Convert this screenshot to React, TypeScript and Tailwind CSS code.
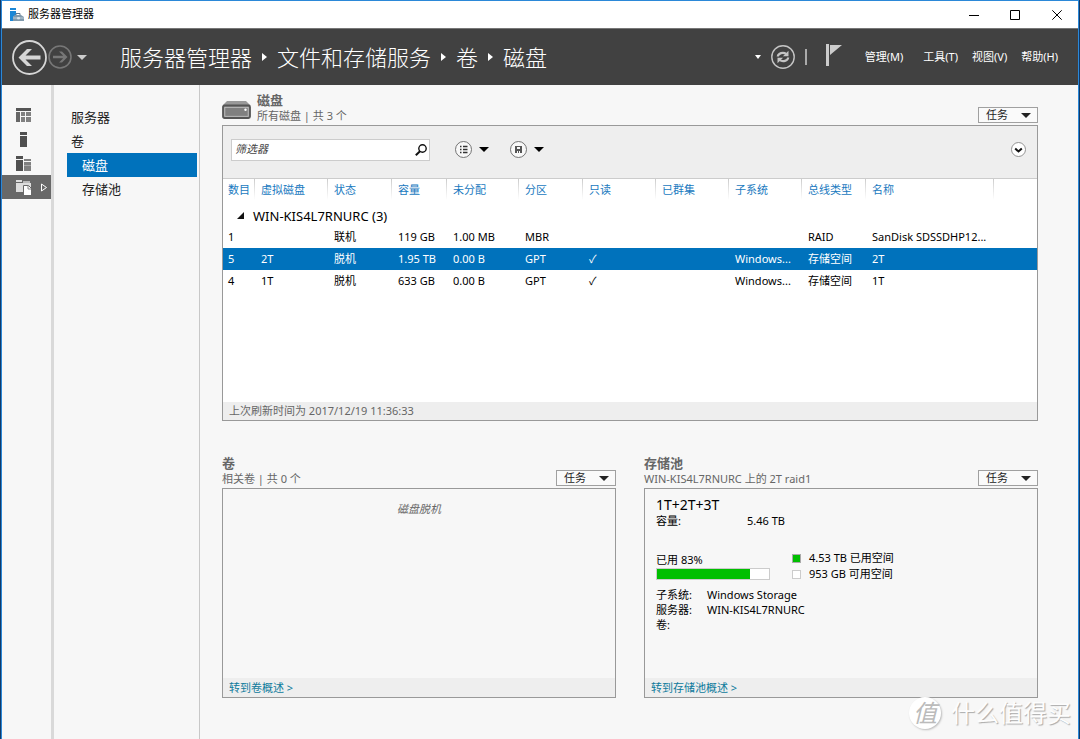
import { Fragment } from "react";
import type { ReactNode } from "react";
import clsx from "clsx";

const columns = [
  { key: "id", label: "数目", width: "w-[32px]" },
  { key: "virtualDisk", label: "虚拟磁盘", width: "w-[73px]" },
  { key: "status", label: "状态", width: "w-[64px]" },
  { key: "capacity", label: "容量", width: "w-[55px]" },
  { key: "unallocated", label: "未分配", width: "w-[72px]" },
  { key: "partition", label: "分区", width: "w-[64px]" },
  { key: "readOnly", label: "只读", width: "w-[73px]" },
  { key: "clustered", label: "已群集", width: "w-[73px]" },
  { key: "subsystem", label: "子系统", width: "w-[73px]" },
  { key: "bus", label: "总线类型", width: "w-[64px]" },
  { key: "name", label: "名称", width: "w-[128px]" },
] as const;

type Disk = Partial<Record<(typeof columns)[number]["key"], string>> & {
  selected?: boolean;
};

const disks: Disk[] = [
  { id: "1", status: "联机", capacity: "119 GB", unallocated: "1.00 MB", partition: "MBR", bus: "RAID", name: "SanDisk SDSSDHP12..." },
  { id: "5", virtualDisk: "2T", status: "脱机", capacity: "1.95 TB", unallocated: "0.00 B", partition: "GPT", readOnly: "✓", subsystem: "Windows...", bus: "存储空间", name: "2T", selected: true },
  { id: "4", virtualDisk: "1T", status: "脱机", capacity: "633 GB", unallocated: "0.00 B", partition: "GPT", readOnly: "✓", subsystem: "Windows...", bus: "存储空间", name: "1T" },
];

const crumbs = ["服务器管理器", "文件和存储服务", "卷", "磁盘"];
const menus = [
  { label: "管理(M)", gap: "mr-5" },
  { label: "工具(T)", gap: "mr-[14px]" },
  { label: "视图(V)", gap: "mr-[14px]" },
  { label: "帮助(H)", gap: "" },
];

function Caret({ className }: { className?: string }) {
  return (
    <svg viewBox="0 0 10 5" className={clsx("h-[5px] w-[10px] shrink-0", className)}>
      <path d="M0 0h10L5 5z" fill="currentColor" />
    </svg>
  );
}

function TaskButton() {
  return (
    <button className="flex h-4 w-[60px] items-center justify-between border border-[#a0a0a0] bg-[#fafafa] pr-[6px] pl-[7px] text-[11px] leading-[14px] text-[#222]">
      任务
      <Caret />
    </button>
  );
}

function SectionHeader({ title, subtitle, icon }: { title: string; subtitle: string; icon?: ReactNode }) {
  return (
    <header className="flex h-[33px] items-end justify-between pb-[2px]">
      <div className="flex items-center gap-[6px]">
        {icon}
        <div className="text-[#666]">
          <h2 className="text-[13px] leading-[15px] font-bold">{title}</h2>
          <p className="text-[11px] leading-[15px]">{subtitle}</p>
        </div>
      </div>
      <TaskButton />
    </header>
  );
}

function TitleBar() {
  return (
    <div className="flex h-[27px] items-center justify-between bg-white pl-2">
      <div className="flex items-center gap-1 text-[11px] text-black">
        <svg viewBox="0 0 14 14" className="h-[14px] w-[14px]">
          <path d="M0 0h6v2H0zM0 3h6v4l-3 2v4H0z" fill="#1b87d6" />
          <path d="M3 9l2-2h6l3 2v4H3z" fill="#7f99ac" />
          <path d="M6 7V5.500h4V7" fill="none" stroke="#60798c" />
          <path d="M3 10h11M7.500 9.500h2v1.500h-2z" stroke="#dce6ed" strokeWidth=".7" fill="#dce6ed" />
        </svg>
        服务器管理器
      </div>
      <div className="flex h-full text-black">
        <button aria-label="最小化" className="flex w-[41px] items-center justify-center">
          <svg viewBox="0 0 10 10" className="size-[10px]">
            <path d="M0 5.500h10" stroke="currentColor" />
          </svg>
        </button>
        <button aria-label="最大化" className="flex w-[42px] items-center justify-center">
          <svg viewBox="0 0 10 10" className="size-[10px]">
            <path d="M.5.5h9v9h-9z" fill="none" stroke="currentColor" />
          </svg>
        </button>
        <button aria-label="关闭" className="flex w-[42px] items-center justify-center">
          <svg viewBox="0 0 10 10" className="size-[10px]">
            <path d="M.3.3l9.400 9.400M9.700.3L.3 9.700" stroke="currentColor" />
          </svg>
        </button>
      </div>
    </div>
  );
}

function NavHeader() {
  return (
    <div className="flex h-[57px] items-center justify-between border-t border-[#777] bg-[#414141] pr-5 pl-[10px] text-white">
      <div className="flex items-center">
        <button aria-label="后退">
          <svg viewBox="0 0 35 35" className="size-[35px]">
            <circle cx="17.500" cy="17.500" r="16.500" fill="none" stroke="#d6d6d6" strokeWidth="1.800" />
            <path d="M6.500 17.500L15 9h5l-6.500 6.500h15v4h-15l6.500 6.500h-5z" fill="#d6d6d6" />
          </svg>
        </button>
        <button aria-label="前进" className="ml-[1px]">
          <svg viewBox="0 0 24 24" className="size-[24px]">
            <circle cx="12" cy="12" r="11" fill="none" stroke="#777" strokeWidth="1.600" />
            <path d="M19.500 12L14 6.500h-3l4.200 4.300H5v2.400h10.200L11 17.500h3z" fill="#777" />
          </svg>
        </button>
        <button aria-label="历史记录" className="ml-[5px] text-[#ccc]">
          <Caret />
        </button>
        <nav className="ml-[33px] flex items-center text-[22px] leading-8 font-light">
          {crumbs.map((crumb, i) => (
            <Fragment key={crumb}>
              {i > 0 && (
                <svg viewBox="0 0 5 8" className="mx-[10px] h-2 w-[5px]">
                  <path d="M0 0l5 4-5 4z" fill="#fff" />
                </svg>
              )}
              <a href="#">{crumb}</a>
            </Fragment>
          ))}
        </nav>
      </div>
      <div className="flex items-center text-[11px]">
        <svg viewBox="0 0 6 4" className="h-1 w-[6px]">
          <path d="M0 0h6L3 4z" fill="#fff" />
        </svg>
        <button aria-label="刷新" className="ml-[10px]">
          <svg viewBox="0 0 24 24" className="size-[24px]">
            <g fill="none" stroke="#c4c4c4">
              <circle cx="12" cy="12" r="11.200" strokeWidth="1.400" />
              <path d="M6.800 11.500a5 4 0 0 1 8.500-2.500M17.200 12.500a5 4 0 0 1-8.500 2.500" strokeWidth="2.200" />
            </g>
            <path d="M17.500 5.800v5.400h-5.600zM6.500 18.200v-5.400h5.600z" fill="#c4c4c4" />
          </svg>
        </button>
        <span className="ml-[10px] h-4 w-[2px] bg-[#aaa]" />
        <button aria-label="通知" className="ml-[19px]">
          <svg viewBox="0 0 16 24" className="mb-1 h-[24px] w-4">
            <path d="M0 1h3v22H0zM4 2h12L4 12z" fill="#ccc" />
          </svg>
        </button>
        <div className="ml-[23px] flex">
          {menus.map((menu) => (
            <button key={menu.label} className={menu.gap}>
              {menu.label}
            </button>
          ))}
        </div>
      </div>
    </div>
  );
}

function IconRail() {
  return (
    <div className="flex w-[52px] shrink-0 flex-col border-r-[3px] border-[#d9d9d9] bg-[#f7f7f7] pt-[18px]">
      <button aria-label="仪表板" className="flex h-6 items-center pl-[14px]">
        <svg viewBox="0 0 15 14" className="h-[14px] w-[15px]">
          <path d="M0 0h15v3H0z" fill="#555" />
          <path d="M0 4h4v10H0z" fill="#666" />
          <path d="M5 4h4v4H5zM10 4h5v4h-5zM5 9h4v5H5zM10 9h5v5h-5z" fill="#808080" />
        </svg>
      </button>
      <button aria-label="本地服务器" className="flex h-6 items-center pl-[18px]">
        <svg viewBox="0 0 7 15" className="h-[15px] w-[7px]">
          <path d="M0 0h7v3H0zM0 4h7v11H0z" fill="#505050" />
        </svg>
      </button>
      <button aria-label="所有服务器" className="flex h-6 items-center pl-[14px]">
        <svg viewBox="0 0 15 15" className="h-[15px] w-[15px]">
          <path d="M0 0h7v3H0zM0 4h7v11H0z" fill="#505050" />
          <path d="M8 3h7v2H8zM8 6h7v9H8z" fill="#808080" />
          <path d="M8 9.500h7" stroke="#a8a8a8" />
        </svg>
      </button>
      <button aria-label="文件和存储服务" className="flex h-6 items-center gap-[10px] bg-[#686868] pl-[14px]">
        <svg viewBox="0 0 15 15" className="h-[15px] w-[15px]">
          <path d="M0 0h6v2H0zM0 3h15v9H0z" fill="#ddd" />
          <path d="M7 1h7v2H7z" fill="#bbb" />
          <path d="M7.500 5.500h5l3 3v7h-8z" fill="#fff" stroke="#686868" />
          <path d="M12 5.500V9h3.500" fill="none" stroke="#888" />
        </svg>
        <svg viewBox="0 0 6 9" className="h-[9px] w-[6px]">
          <path d="M.5 1v7l5-3.500z" fill="none" stroke="#fff" />
        </svg>
      </button>
    </div>
  );
}

function SideNav() {
  return (
    <nav className="flex w-[146px] shrink-0 flex-col border-r border-[#c8c8c8] bg-[#f7f7f7] pt-[20px] pr-[2px] pl-[13px] text-[13px] leading-6 text-[#222]">
      <a href="#" className="pl-1">服务器</a>
      <a href="#" className="pl-1">卷</a>
      <a href="#" className="bg-[#0072bc] pl-[15px] text-white">磁盘</a>
      <a href="#" className="pl-[15px]">存储池</a>
    </nav>
  );
}

function Toolbar() {
  return (
    <div className="flex h-[53px] items-center border-b border-[#ccc] bg-[#eee] pr-[11px] pb-[5px] pl-2">
      <div className="flex h-[22px] w-[199px] items-center border border-[#ccc] bg-white pr-[2px] pl-[3px]">
        <input
          aria-label="筛选器"
          placeholder="筛选器"
          className="min-w-0 flex-1 text-[11px] italic outline-none placeholder:text-[#444]"
        />
        <svg viewBox="0 0 12 12" className="size-3">
          <circle cx="7.500" cy="4.500" r="3.700" fill="none" stroke="#111" strokeWidth="1.400" />
          <path d="M5 7.200L.8 11.200" stroke="#111" strokeWidth="2" />
        </svg>
      </div>
      <button aria-label="查询" className="ml-[25px] flex items-center gap-[7px] text-black">
        <svg viewBox="0 0 17 17" className="size-[17px]">
          <circle cx="8.500" cy="8.500" r="8" fill="#f8f8f8" stroke="#666" strokeWidth=".9" />
          <path d="M5 5.500h1.500M5 8.500h1.500M5 11.500h1.500M8 5.500h4.500M8 8.500h4.500M8 11.500h4.500" stroke="#333" strokeWidth="1.300" />
        </svg>
        <Caret />
      </button>
      <button aria-label="保存" className="ml-[21px] flex items-center gap-[7px] text-black">
        <svg viewBox="0 0 17 17" className="size-[17px]">
          <circle cx="8.500" cy="8.500" r="8" fill="#f8f8f8" stroke="#666" strokeWidth=".9" />
          <path d="M5 5h7v7H5z" fill="#555" />
          <path d="M7 6h3v2H7zM7 10h1v2H7zM9 10h1v2H9z" fill="#f8f8f8" />
        </svg>
        <Caret />
      </button>
      <button aria-label="展开" className="ml-auto">
        <svg viewBox="0 0 15 15" className="size-[15px]">
          <circle cx="7.500" cy="7.500" r="7" fill="#fff" stroke="#888" strokeWidth=".9" />
          <path d="M4.200 6.500l3.300 3 3.300-3" fill="none" stroke="#111" strokeWidth="2" />
        </svg>
      </button>
    </div>
  );
}

function DiskTable() {
  return (
    <table className="w-full table-fixed text-left text-[11px] text-black">
      <colgroup>
        {columns.map((column) => (
          <col key={column.key} className={column.width} />
        ))}
        <col />
      </colgroup>
      <thead>
        <tr className="h-[26px] align-top leading-[21px] text-[#1979c0]">
          {columns.map((column) => (
            <th
              key={column.key}
              className="bg-[linear-gradient(#ccc,#fff_80%)] bg-[length:1px_100%] bg-right bg-no-repeat pl-[6px] font-normal whitespace-nowrap first:pl-[5px]"
            >
              {column.label}
            </th>
          ))}
          <td />
        </tr>
      </thead>
      <tbody>
        <tr className="h-[21px]">
          <td colSpan={12} className="pl-[14px] text-[13px] leading-5">
            <button className="flex items-center gap-[9px]">
              <svg viewBox="0 0 7 7" className="size-[7px]">
                <path d="M7 0v7H0z" fill="#111" />
              </svg>
              WIN-KIS4L7RNURC (3)
            </button>
          </td>
        </tr>
        {disks.map((disk) => (
          <tr key={disk.id} className={clsx("h-[22px]", disk.selected && "bg-[#0072bc] text-white")}>
            {columns.map((column) => (
              <td key={column.key} className="pl-[6px] whitespace-nowrap first:pl-[5px]">
                {disk[column.key]}
              </td>
            ))}
            <td />
          </tr>
        ))}
      </tbody>
    </table>
  );
}

function VolumesPanel() {
  return (
    <section>
      <SectionHeader title="卷" subtitle="相关卷 | 共 0 个" />
      <div className="flex min-h-[210px] flex-col justify-between border border-[#999]">
        <p className="pt-3 text-center text-[11px] leading-4 text-[#666] italic">磁盘脱机</p>
        <footer className="bg-[#eee] px-[6px] text-[11px] leading-[19px]">
          <a href="#" className="text-[#0d7a9c]">转到卷概述 &gt;</a>
        </footer>
      </div>
    </section>
  );
}

function StoragePoolPanel() {
  const usedPercent = 83;

  return (
    <section>
      <SectionHeader title="存储池" subtitle="WIN-KIS4L7RNURC 上的 2T raid1" />
      <div className="flex min-h-[210px] flex-col justify-between border border-[#999] text-[11px] leading-4 text-black">
        <div className="px-[11px] pt-2">
          <h3 className="text-[14px] leading-4">1T+2T+3T</h3>
          <dl className="flex">
            <dt className="w-[91px]">容量:</dt>
            <dd>5.46 TB</dd>
          </dl>
          <div className="mt-[21px] flex gap-[22px]">
            <div className="w-[114px] pt-[2px]">
              <p>已用 {usedPercent}%</p>
              <div className="h-3 border border-[#ccc] bg-white">
                <div className="h-full bg-[#00bf00]" style={{ width: `${usedPercent}%` }} />
              </div>
            </div>
            <ul>
              <li className="flex items-center gap-2">
                <span className="size-[9px] border border-[#aaa] bg-[#00bf00]" />
                4.53 TB 已用空间
              </li>
              <li className="flex items-center gap-2">
                <span className="size-[9px] border border-[#ccc] bg-white" />
                953 GB 可用空间
              </li>
            </ul>
          </div>
          <dl className="mt-[5px] grid grid-cols-[51px_1fr] leading-[15px]">
            <dt>子系统:</dt>
            <dd>Windows Storage</dd>
            <dt>服务器:</dt>
            <dd>WIN-KIS4L7RNURC</dd>
            <dt>卷:</dt>
          </dl>
        </div>
        <footer className="bg-[#eee] px-[6px] leading-[19px]">
          <a href="#" className="text-[#0d7a9c]">转到存储池概述 &gt;</a>
        </footer>
      </div>
    </section>
  );
}

function DiskIcon() {
  return (
    <svg viewBox="0 0 29 18" className="mt-1 h-[18px] w-[29px]">
      <path d="M5 0h19l4 4H1z" fill="#999" />
      <rect x="1" y="4.500" width="27" height="12.500" rx="1.500" fill="#808080" stroke="#555" strokeWidth="1.800" />
      <rect x="2.800" y="6.300" width="23.400" height="9" fill="none" stroke="#c8c8c8" strokeWidth=".8" />
      <circle cx="23.500" cy="8.800" r="1.200" fill="#fff" />
    </svg>
  );
}

export default function App() {
  return (
    <div className="relative flex min-h-screen flex-col border-x border-[#123a68] bg-[#f7f7f7] font-['Noto_Sans','Noto_Sans_CJK_SC',sans-serif]">
      <div className="flex flex-1 flex-col border-x border-t border-[#2b88d8]">
        <TitleBar />
        <NavHeader />
        <div className="flex flex-1">
          <IconRail />
          <SideNav />
          <main className="flex min-w-0 flex-1 flex-col pt-[7px] pr-10 pb-[41px] pl-[22px]">
            <section className="flex flex-1 flex-col">
              <SectionHeader title="磁盘" subtitle="所有磁盘 | 共 3 个" icon={<DiskIcon />} />
              <div className="flex flex-1 flex-col border border-[#999] bg-white">
                <Toolbar />
                <div className="flex-1">
                  <DiskTable />
                </div>
                <footer className="bg-[#eee] px-[6px] text-[11px] leading-[18px] text-[#666]">
                  上次刷新时间为 2017/12/19 11:36:33
                </footer>
              </div>
            </section>
            <div className="mt-[34px] grid grid-cols-2 gap-7">
              <VolumesPanel />
              <StoragePoolPanel />
            </div>
          </main>
        </div>
      </div>

      <div className="pointer-events-none absolute right-2 bottom-[10px] flex items-center gap-[10px] text-[#fdfdfd]">
        <span className="flex size-8 items-center justify-center rounded-full bg-white text-[24px] leading-8 text-[#bbb] italic shadow-[1px_1px_2px_#bbb]">
          值
        </span>
        <span className="text-2xl leading-8 [text-shadow:1px_1px_1px_#aaa]">什么值得买</span>
      </div>
    </div>
  );
}
